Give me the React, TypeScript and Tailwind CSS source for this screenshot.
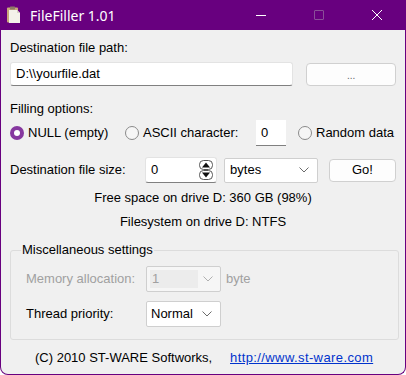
import React from "react";

const Chevron = ({ color = "#6b6b6b" }: { color?: string }) => (
  <svg width="10" height="6" viewBox="0 0 10 6" className="block">
    <path d="M0.5 0.5 L5 5 L9.5 0.5" fill="none" stroke={color} strokeWidth="1" />
  </svg>
);

const Radio = ({ checked }: { checked?: boolean }) =>
  checked ? (
    <div className="w-[14px] h-[14px] rounded-full bg-[#86389f] flex items-center justify-center shrink-0">
      <div className="w-[6px] h-[6px] rounded-full bg-white" />
    </div>
  ) : (
    <div className="w-[14px] h-[14px] rounded-full border border-[#8a8a8a] bg-[#f6f6f6] shrink-0" />
  );

export default function App() {
  return (
    <div
      className="w-[406px] h-[375px] bg-[#f0f0f0] border-x border-b border-[#68007f] rounded-b-[8px] flex flex-col overflow-hidden text-[13px] text-black"
      style={{ fontFamily: '"Liberation Sans", Arial, sans-serif' }}
    >
      {/* Title bar */}
      <div className="h-[30px] bg-[#68007f] flex items-center shrink-0 -mx-px">
        <svg width="16" height="18" viewBox="0 0 16 18" className="ml-[6px]">
          <rect x="1" y="1.5" width="11" height="15" rx="1" fill="#c9a77a" />
          <rect x="4" y="0.5" width="5" height="3" rx="0.5" fill="#8d7a66" />
          <path d="M3 4 H11 L14 7 V17 H3 Z" fill="#f4f1ea" />
          <path d="M11 4 V7 H14" fill="#d8d2c6" />
        </svg>
        <span
          className="ml-[8px] text-white text-[14px]"
          style={{ fontFamily: '"Noto Sans", "Open Sans", sans-serif' }}
        >
          FileFiller 1.01
        </span>
        <div className="ml-auto flex items-center h-full">
          <div className="w-[58px] h-full flex items-center justify-center">
            <span className="block w-[10px] h-px bg-white" />
          </div>
          <div className="w-[58px] h-full flex items-center justify-center">
            <span className="block w-[10px] h-[10px] border border-[#8a4f98] rounded-[1px]" />
          </div>
          <div className="w-[58px] h-full flex items-center justify-center">
            <svg width="12" height="12" viewBox="0 0 12 12">
              <path d="M1 1 L11 11 M11 1 L1 11" stroke="white" strokeWidth="1" />
            </svg>
          </div>
        </div>
      </div>

      {/* Body */}
      <div className="flex flex-col px-[9px] pt-[10px]">
        <div className="h-[16px] leading-[16px]">Destination file path:</div>
        <div className="flex items-center mt-[6px] h-[24px]">
          <div className="w-[285px] h-[24px] bg-white border border-[#e3e3e3] border-b-[#808080] rounded-[3px] flex items-center pl-[5px]">
            D:\\yourfile.dat
          </div>
          <div className="ml-[13px] w-[90px] h-[23px] bg-[#fdfdfd] border border-[#d0d0d0] rounded-[4px] flex items-center justify-center text-[#666] text-[10px] pt-[2px]">
            ...
          </div>
        </div>

        <div className="h-[16px] leading-[16px] mt-[15px]">Filling options:</div>
        <div className="flex items-center mt-[3px] h-[26px]">
          <Radio checked />
          <span className="ml-[4px] w-[97px]">NULL (empty)</span>
          <Radio />
          <span className="ml-[4px] w-[113px]">ASCII character:</span>
          <div className="w-[30px] h-[26px] bg-white border-b border-[#808080] flex items-center pl-[5px]">0</div>
          <div className="ml-[12px]"><Radio /></div>
          <span className="ml-[4px]">Random data</span>
        </div>

        <div className="flex items-center mt-[11px] h-[26px]">
          <span className="w-[137px]">Destination file size:</span>
          <div className="w-[73px] h-[26px] bg-white border border-[#e3e3e3] border-b-[#808080] rounded-[3px] flex items-center pl-[5px]">
            <span className="flex-1">0</span>
            <svg width="14" height="20" viewBox="0 0 14 20" className="mr-[3px]">
              <rect x="0.5" y="0.5" width="13" height="9" rx="4" fill="#fff" stroke="#555" />
              <rect x="0.5" y="10.5" width="13" height="9" rx="4" fill="#fff" stroke="#555" />
              <path d="M3 7.5 L7 2.5 L11 7.5 Z" fill="#111" />
              <path d="M3 12.5 L7 17.5 L11 12.5 Z" fill="#111" />
            </svg>
          </div>
          <div className="ml-[7px] w-[95px] h-[25px] bg-white border border-[#cfcfcf] rounded-[2px] flex items-center pl-[5px] pr-[8px]">
            <span className="flex-1">bytes</span>
            <Chevron />
          </div>
          <div className="ml-[11px] w-[68px] h-[23px] bg-[#fdfdfd] border border-[#d0d0d0] rounded-[4px] flex items-center justify-center">
            Go!
          </div>
        </div>

        <div className="text-center mt-[7px] h-[16px] leading-[16px]">Free space on drive D: 360 GB (98%)</div>
        <div className="text-center mt-[8px] h-[16px] leading-[16px]">Filesystem on drive D: NTFS</div>

        <div className="relative mt-[20px] -mr-[3px] h-[90px] border border-[#dcdcdc] rounded-[3px]">
          <span className="absolute left-[10px] -top-[9px] bg-[#f0f0f0] px-px leading-[16px]">Miscellaneous settings</span>
          <div className="flex flex-col px-[15px] pt-[15px]">
            <div className="flex items-center h-[26px]">
              <span className="w-[120px] text-[#a0a0a0]">Memory allocation:</span>
              <div className="w-[75px] h-[26px] bg-[#f6f6f6] border border-[#cfcfcf] rounded-[2px] flex items-center p-[3px]">
                <span className="w-[48px] h-full bg-[#ececec] text-[#a0a0a0] pl-[2px] leading-[18px]">1</span>
                <span className="ml-auto mr-[4px]"><Chevron color="#b0b0b0" /></span>
              </div>
              <span className="ml-[5px] text-[#a0a0a0]">byte</span>
            </div>
            <div className="flex items-center h-[26px] mt-[9px]">
              <span className="w-[120px]">Thread priority:</span>
              <div className="w-[75px] h-[26px] bg-white border border-[#cfcfcf] rounded-[2px] flex items-center pl-[4px] pr-[8px]">
                <span className="flex-1">Normal</span>
                <Chevron />
              </div>
            </div>
          </div>
        </div>

        <div className="flex items-center mt-[10px] h-[16px] leading-[16px]">
          <span className="ml-[25px] w-[195px]">(C) 2010 ST-WARE Softworks,</span>
          <span className="text-[#0033cc] underline tracking-[0.4px]">http://www.st-ware.com</span>
        </div>
      </div>
    </div>
  );
}
